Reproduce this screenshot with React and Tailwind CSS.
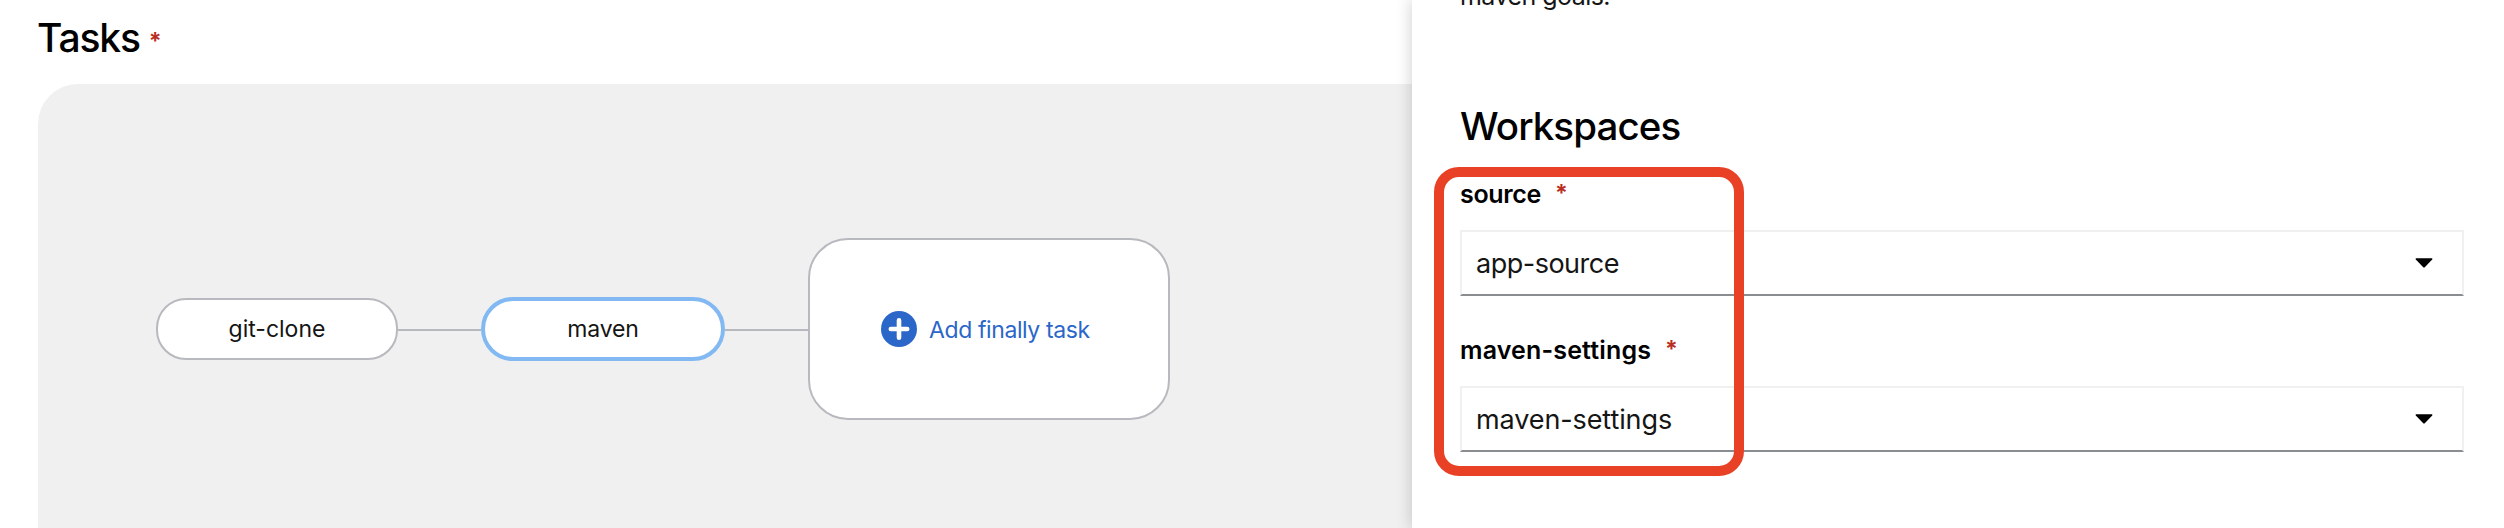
function Required({ className }) {
  return <span className={`block font-bold leading-none text-[#b92e1e] ${className}`}>*</span>;
}

function Edge() {
  return <div className="mt-[2px] h-[2px] w-[83px] shrink-0 bg-[#b8b9be]" />;
}

function SelectField({ label, tracking, value, valueTracking, className }) {
  return (
    <div className={className}>
      <label className="flex h-9 items-start gap-[14px] text-[25px] font-semibold leading-9 text-black">
        <span className={tracking}>{label}</span>
        <Required className="pt-[6px] text-[23px]" />
      </label>
      <button className="mt-[18px] flex h-[66px] w-full items-center justify-between border-2 border-[#f0f0f0] border-b-[#8a8d90] bg-white pl-[14px] pr-[29px] text-left text-[27px] text-[#151515]">
        <span className={`pt-[2px] ${valueTracking}`}>{value}</span>
        <svg className="h-[10px] w-[18px]" viewBox="0 0 18 10">
          <path d="M1.2 0.3H16.8Q18 0.5 17.2 1.4L10 9Q9 10 8 9L0.8 1.4Q0 0.5 1.2 0.3Z" fill="#000" />
        </svg>
      </button>
    </div>
  );
}

export default function App() {
  return (
    <div className="relative flex h-[528px] w-[2504px] overflow-hidden bg-white font-[Inter,sans-serif] text-[#151515]">
      <main className="flex w-[1412px] shrink-0 flex-col pl-[38px]">
        <h2 className="-ml-px flex h-[84px] items-start gap-[9px] pt-[18px] text-[39px] font-medium leading-10 text-black">
          <span className="tracking-[-1.15px]">Tasks</span>
          <Required className="pt-[12px] text-[23px]" />
        </h2>
        <div className="flex flex-1 items-start rounded-tl-[40px] bg-[#f0f0f0] pl-[118px] pt-[154px]">
          <div className="flex h-[182px] items-center">
            <div className="flex h-[62px] w-[242px] items-center justify-center rounded-[30px] border-2 border-[#b8b9be] bg-white text-[23px]">
              git-clone
            </div>
            <Edge />
            <div className="flex h-16 w-[244px] items-center justify-center rounded-[32px] border-4 border-[#82b9f3] bg-white text-[23px] tracking-[-0.1px]">
              maven
            </div>
            <Edge />
            <div className="flex h-[182px] w-[362px] items-center rounded-[40px] border-2 border-[#b8b9be] bg-white pl-[71px]">
              <svg className="h-9 w-9 shrink-0" viewBox="0 0 36 36">
                <circle cx="18" cy="18" r="18" fill="#2b66c9" />
                <path d="M18 9.3V26.7M9.8 18H26.2" stroke="#fff" strokeWidth="4.6" strokeLinecap="round" />
              </svg>
              <span className="pl-3 pt-[3px] text-[23px] tracking-[-0.4px] text-[#2b66c9]">Add finally task</span>
            </div>
          </div>
        </div>
      </main>

      <aside className="w-[1092px] shrink-0 bg-white pl-12 pr-10 shadow-[0_0_16px_rgba(0,0,0,0.2)]">
        <p className="-mt-[22px] text-[25px] leading-9 tracking-[-0.55px]">maven goals.</p>
        <h2 className="mt-[92px] text-[38.5px] font-medium leading-10 tracking-[-0.9px] text-black">Workspaces</h2>
        <SelectField className="mt-[30px]" label="source" tracking="tracking-[-0.35px]" value="app-source" valueTracking="tracking-[-0.5px]" />
        <SelectField className="mt-9" label="maven-settings" tracking="tracking-[0.15px]" value="maven-settings" valueTracking="tracking-[-0.1px]" />
      </aside>

      <div className="pointer-events-none absolute left-[1434px] top-[167px] h-[309px] w-[310px] rounded-[25px] border-[10px] border-[#e94125]" />
    </div>
  );
}
